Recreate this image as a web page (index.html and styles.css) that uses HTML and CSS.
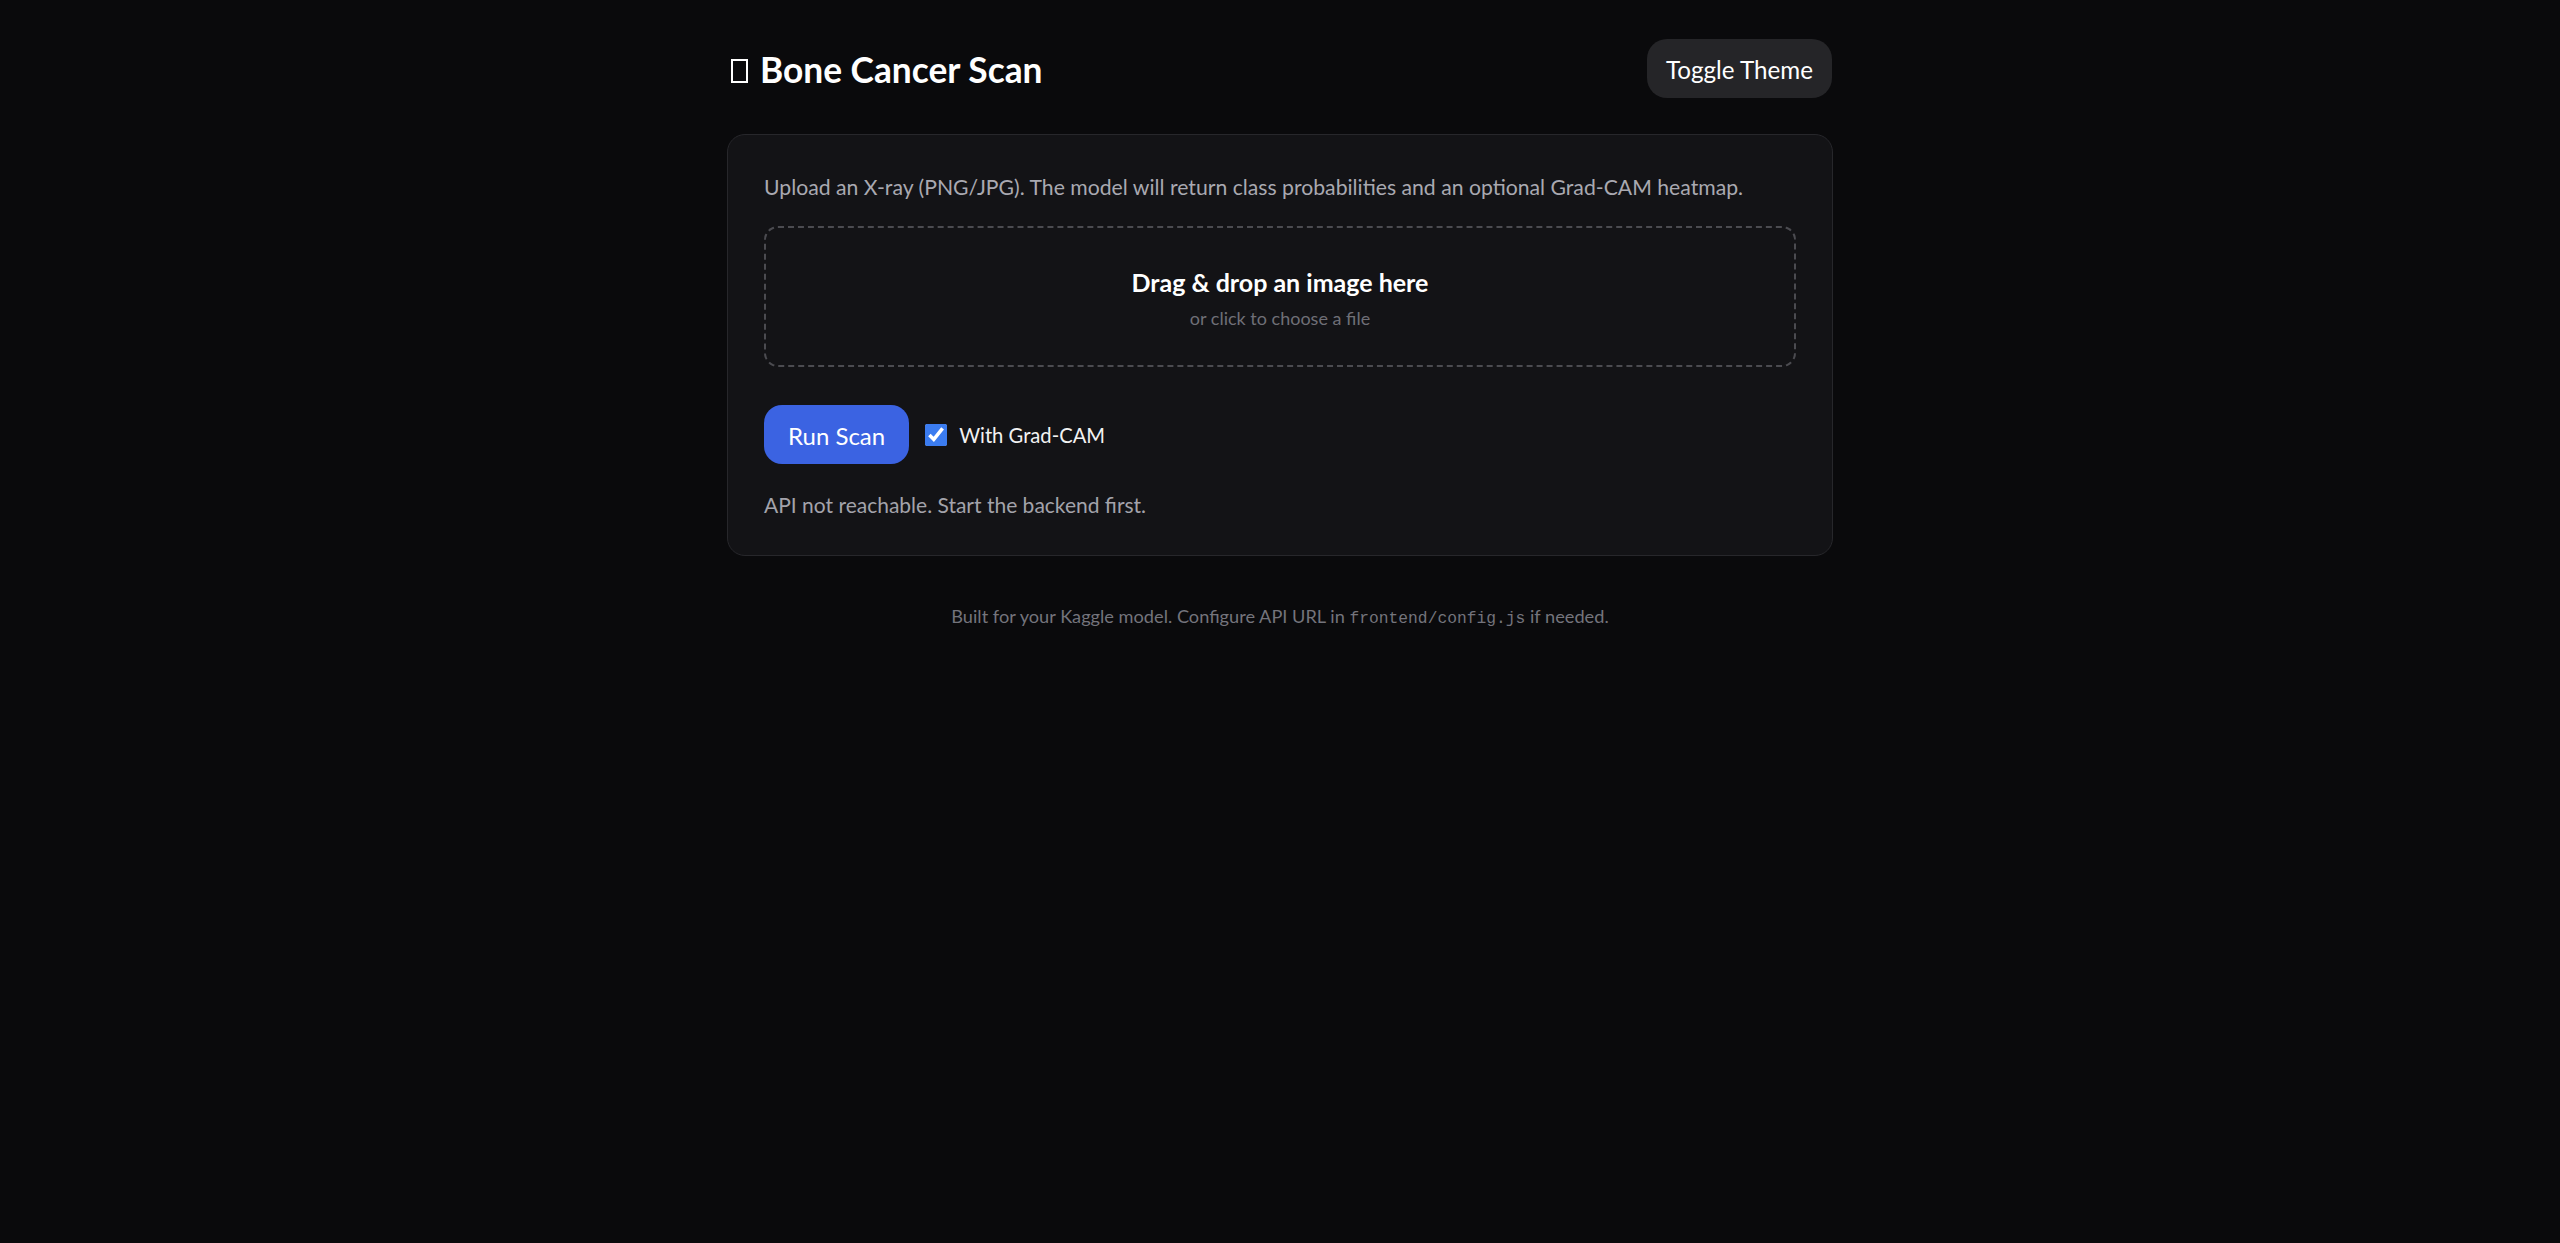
FILE: index.html
```html
<!DOCTYPE html>
<html lang="en">
<head>
<meta charset="utf-8">
<title>Bone Cancer Scan</title>
<link rel="stylesheet" href="styles.css">
</head>
<body>
<div class="container">
  <header class="header">
    <h1 class="title"><span class="tofu" aria-hidden="true"></span> Bone Cancer Scan</h1>
    <button class="btn-theme" type="button">Toggle Theme</button>
  </header>

  <main class="card">
    <p class="intro">Upload an X-ray (PNG/JPG). The model will return class probabilities and an optional Grad-CAM heatmap.</p>

    <div class="dropzone">
      <div class="drop-title">Drag &amp; drop an image here</div>
      <div class="drop-sub">or click to choose a file</div>
    </div>

    <div class="actions">
      <button class="btn-run" type="button">Run Scan</button>
      <label class="check">
        <input type="checkbox" class="check-input" checked>
        <span class="check-label">With Grad-CAM</span>
      </label>
    </div>

    <p class="status">API not reachable. Start the backend first.</p>
  </main>

  <footer class="footer">Built for your Kaggle model. Configure API URL in <code class="code">frontend/config.js</code> if needed.</footer>
</div>
</body>
</html>
```
FILE: styles.css
```css
* { box-sizing: border-box; }

html, body {
  margin: 0;
  background: #0a0a0c;
  color: #ffffff;
  font-family: "Lato", "Noto Sans", sans-serif;
}

.container {
  width: 1106px;
  margin: 0 auto;
  padding-top: 39px;
}

.header {
  display: flex;
  align-items: center;
  justify-content: space-between;
  height: 59px;
}

.title {
  margin: 0;
  padding: 3px 0 0 4px;
  font-size: 35.3px;
  line-height: 42px;
  font-weight: 700;
  color: #ffffff;
  display: flex;
  align-items: center;
}

.tofu {
  display: inline-block;
  width: 17px;
  height: 24px;
  border: 2px solid #ffffff;
  margin: 1px 12px 0 0;
}

.btn-theme {
  height: 59px;
  padding: 2px 19px 0 19px;
  margin-right: 1px;
  border: 0;
  border-radius: 20px;
  background: #252528;
  color: #ffffff;
  font-family: inherit;
  font-size: 24.2px;
  line-height: 57px;
}

.card {
  display: block;
  margin-top: 36px;
  background: #131316;
  border: 1px solid #27272b;
  border-radius: 18px;
  padding: 36px 36px 36px 36px;
}

.intro {
  margin: 0;
  font-size: 21.2px;
  line-height: 33px;
  color: #a9a9b1;
}

.dropzone {
  margin-top: 22px;
  border: 2px dashed #4b4b50;
  border-radius: 14px;
  padding: 39px 0 35px 0;
  text-align: center;
  display: flex;
  flex-direction: column;
  align-items: center;
  gap: 9px;
}

.drop-title {
  font-size: 25px;
  font-weight: 700;
  line-height: 30px;
  color: #ffffff;
}

.drop-sub {
  font-size: 18px;
  line-height: 24px;
  color: #6f6f76;
}

.actions {
  margin-top: 38px;
  display: flex;
  align-items: center;
}

.btn-run {
  height: 59px;
  padding: 2px 24px 0 24px;
  border: 0;
  border-radius: 18px;
  background: #3b63e2;
  color: #ffffff;
  font-family: inherit;
  font-size: 24px;
  line-height: 57px;
}

.check {
  display: flex;
  align-items: center;
  margin-left: 16px;
}

.check-input {
  width: 22px;
  height: 22px;
  margin: 0;
  accent-color: #3b7cf0;
}

.check-label {
  margin-left: 12px;
  font-size: 20.2px;
  line-height: 24px;
  color: #f2f2f2;
}

.status {
  margin: 27px 0 0 0;
  font-size: 21px;
  line-height: 28px;
  color: #a3a3ab;
}

.footer {
  margin-top: 48px;
  text-align: center;
  font-size: 18.2px;
  line-height: 24px;
  color: #74747c;
}

.code {
  font-family: "Liberation Mono", "DejaVu Sans Mono", monospace;
  font-size: 16.3px;
  color: #74747c;
}
```
